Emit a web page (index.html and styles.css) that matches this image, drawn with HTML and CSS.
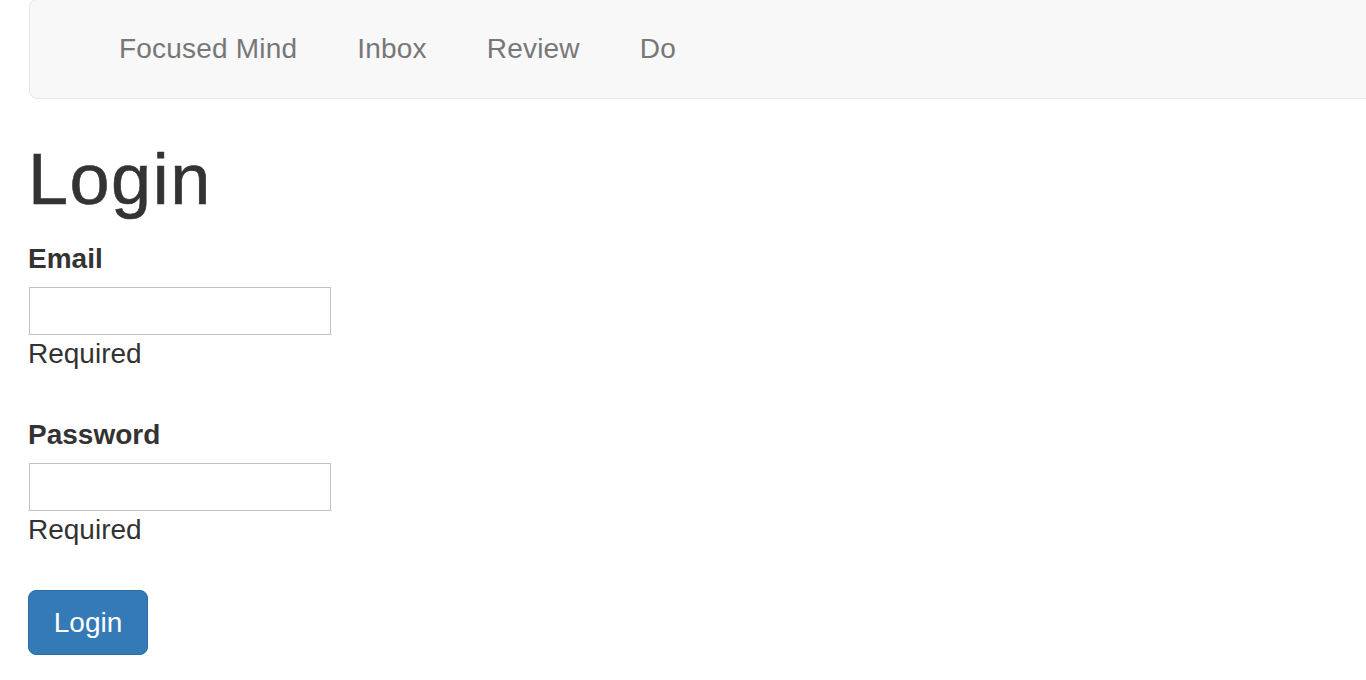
FILE: index.html
```html
<!DOCTYPE html>
<html lang="en">
<head>
<meta charset="utf-8">
<title>Login - Focused Mind</title>
<link rel="stylesheet" href="styles.css">
</head>
<body>
<nav class="navbar">
  <ul class="nav">
    <li><a href="#" class="nav-link">Focused Mind</a></li>
    <li><a href="#" class="nav-link">Inbox</a></li>
    <li><a href="#" class="nav-link">Review</a></li>
    <li><a href="#" class="nav-link">Do</a></li>
  </ul>
</nav>
<main class="page">
  <h1 class="title">Login</h1>
  <form class="login-form">
    <div class="form-group">
      <label class="field-label" for="email">Email</label>
      <input class="field-input" id="email" type="email">
      <div class="help">Required</div>
    </div>
    <div class="form-group">
      <label class="field-label" for="password">Password</label>
      <input class="field-input" id="password" type="password">
      <div class="help">Required</div>
    </div>
    <button class="btn-primary" type="button">Login</button>
  </form>
</main>
</body>
</html>
```
FILE: styles.css
```css
html, body {
  margin: 0;
  padding: 0;
  overflow: hidden;
  background: #fff;
}
body {
  font-family: "Liberation Sans", Arial, sans-serif;
  font-size: 28px;
  color: #333;
}
.navbar {
  box-sizing: border-box;
  height: 100px;
  margin: -1px -20px 0 29px;
  background: #f8f8f8;
  border: 1px solid #e7e7e7;
  border-radius: 8px;
}
.nav {
  list-style: none;
  margin: 0;
  padding: 0 0 0 59px;
  display: flex;
}
.nav-link {
  display: block;
  padding: 29px 30px 29px 30px;
  line-height: 40px;
  color: #777;
  text-decoration: none;
  letter-spacing: 0.2px;
}
.page {
  padding-left: 28px;
}
.title {
  font-size: 72px;
  font-weight: normal;
  line-height: 79px;
  margin: 41px 0 18px 0;
  letter-spacing: 1.5px;
  -webkit-text-stroke: 0.6px #333;
}
.login-form {
  display: flex;
  flex-direction: column;
  align-items: flex-start;
}
.form-group {
  display: flex;
  flex-direction: column;
  align-items: flex-start;
  margin-bottom: 43px;
}
.field-label {
  display: block;
  font-weight: bold;
  line-height: 40px;
  padding-top: 2px;
  margin-bottom: 8px;
}
.field-input {
  box-sizing: border-box;
  display: block;
  width: 302px;
  height: 48px;
  margin: 0 0 0 1px;
  padding: 0 8px;
  border: 1px solid #c2c2c2;
  border-radius: 0;
  background: #fff;
  font: inherit;
}
.help {
  line-height: 32px;
  margin-top: 3px;
}
.btn-primary {
  box-sizing: border-box;
  width: 120px;
  height: 65px;
  margin-top: 1px;
  padding: 0;
  background: #337ab7;
  border: 1px solid #2e6da4;
  border-radius: 8px;
  color: #fff;
  font: inherit;
  line-height: 40px;
  display: flex;
  align-items: center;
  justify-content: center;
}
```
